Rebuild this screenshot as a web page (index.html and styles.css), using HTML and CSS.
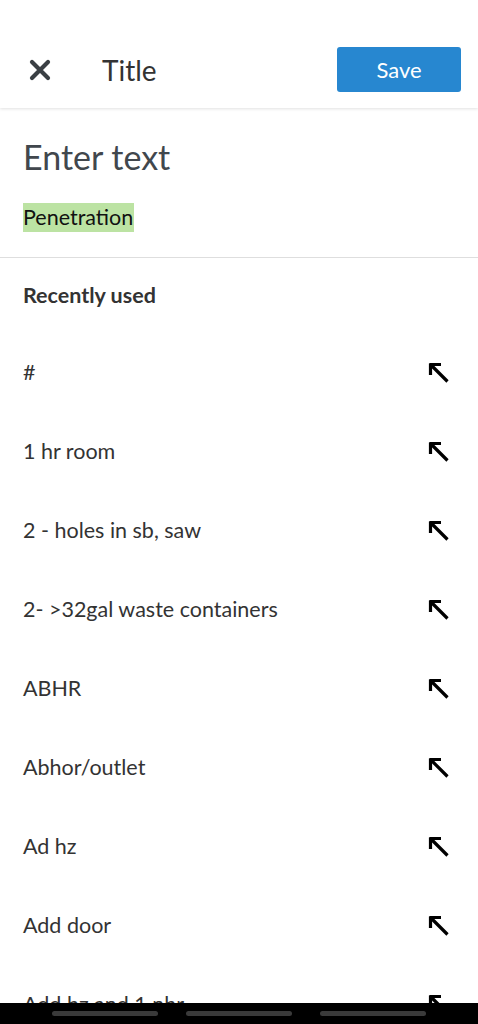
FILE: index.html
```html
<!DOCTYPE html>
<html lang="en">
<head>
  <meta charset="UTF-8" />
  <meta name="viewport" content="width=device-width, initial-scale=1.0"/>
  <title>Title</title>
  <link rel="stylesheet" href="styles.css">
</head>
<body>

  <!-- Top bar -->
  <header class="topbar">
    <button class="close-btn" aria-label="Close">
      <svg width="24" height="24" viewBox="0 0 24 24">
        <path d="M4 4 L20 20 M20 4 L4 20" stroke="#3a3f44" stroke-width="4.2" stroke-linecap="round"/>
      </svg>
    </button>
    <h1 class="title">Title</h1>
    <button class="save-btn">Save</button>
  </header>

  <!-- Input area -->
  <section class="entry">
    <div class="placeholder">Enter text</div>
    <span class="chip">Penetration</span>
  </section>

  <!-- Recently used -->
  <section class="recent">
    <h2>Recently used</h2>
    <ul class="recent-list" id="recentList"></ul>
  </section>

  <!-- Android nav bar -->
  <div class="navbar">
    <span></span><span></span><span></span>
  </div>

  <script>
    const items = [
      '#',
      '1 hr room',
      '2 - holes in sb, saw',
      '2- >32gal waste containers',
      'ABHR',
      'Abhor/outlet',
      'Ad hz',
      'Add door',
      'Add hz and 1 nhr'
    ];

    const list = document.getElementById('recentList');
    items.forEach(text => {
      const li = document.createElement('li');
      const label = document.createElement('span');
      label.textContent = text;
      li.appendChild(label);
      li.insertAdjacentHTML('beforeend',
        '<svg class="arrow" width="24" height="24" viewBox="0 0 24 24">' +
        '<path d="M4.5 3.5 V15 M3.5 4.5 H15 M4.5 4.5 L21.5 21.5" stroke="#000" stroke-width="3.2" fill="none"/>' +
        '</svg>');
      list.appendChild(li);
    });
  </script>
</body>
</html>
```

FILE: styles.css
```css
/* Base */
* {
  margin: 0;
  padding: 0;
  box-sizing: border-box;
}

body {
  font-family: Lato, "Open Sans", sans-serif;
  background-color: #fff;
  color: #333;
}

/* Top bar */
.topbar {
  display: flex;
  align-items: center;
  height: 108px;
  padding: 32px 17px 0 28px;
  background: #fff;
  box-shadow: 0 1px 3px rgba(0, 0, 0, 0.12);
  position: relative;
}

.close-btn {
  background: none;
  border: none;
  width: 24px;
  height: 24px;
  display: flex;
}

.title {
  font-size: 28px;
  font-weight: 400;
  color: #333;
  margin-left: 50px;
  flex: 1;
}

.save-btn {
  width: 124px;
  height: 45px;
  background-color: #2787d0;
  color: #fff;
  border: none;
  border-radius: 3px;
  font-family: inherit;
  font-size: 22px;
  margin-top: -1px;
}

/* Input area */
.entry {
  padding: 27px 23px 25px;
  border-bottom: 1px solid #dedede;
}

.placeholder {
  font-size: 34px;
  color: #41474d;
  line-height: 44px;
  margin-bottom: 24px;
}

.chip {
  display: inline-block;
  background-color: #bce3a3;
  color: #111;
  font-size: 21.5px;
  line-height: 29px;
  padding: 0 1px 0 0;
}

/* Recently used */
.recent h2 {
  font-size: 21.5px;
  font-weight: 700;
  color: #333;
  padding: 24px 23px 0;
  height: 74px;
}

.recent-list {
  list-style: none;
}

.recent-list li {
  display: flex;
  justify-content: space-between;
  align-items: center;
  height: 79px;
  padding: 0 28px 0 23px;
  font-size: 21.5px;
  color: #333;
}

.arrow {
  flex-shrink: 0;
}

/* Android nav bar */
.navbar {
  position: fixed;
  left: 0;
  right: 0;
  bottom: 0;
  height: 21px;
  background: #000;
  display: flex;
  justify-content: center;
  gap: 28px;
  padding-top: 8px;
}

.navbar span {
  width: 106px;
  height: 5px;
  border-radius: 3px;
  background: #3a3a3a;
}
```
